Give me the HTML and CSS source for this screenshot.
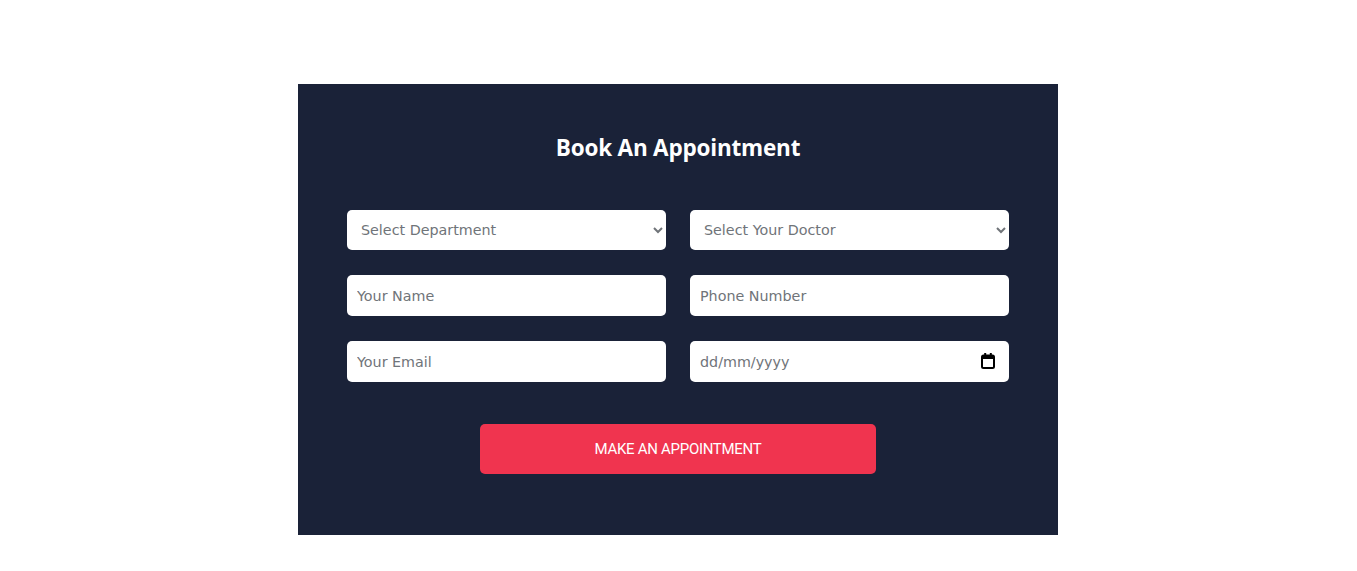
FILE: index.html
```html
<!DOCTYPE html>
<html lang="en">
<head>
<meta charset="utf-8">
<title>Book An Appointment</title>
<link rel="stylesheet" href="styles.css">
</head>
<body>
<section class="panel">
  <h2 class="title">Book An Appointment</h2>
  <form class="form">
    <div class="grid">
      <select class="field select">
        <option>Select Department</option>
      </select>
      <select class="field select">
        <option>Select Your Doctor</option>
      </select>
      <input class="field input" type="text" placeholder="Your Name">
      <input class="field input" type="text" placeholder="Phone Number">
      <input class="field input" type="text" placeholder="Your Email">
      <div class="date-wrap">
        <input class="field input" type="text" placeholder="dd/mm/yyyy">
        <svg class="cal" width="14" height="16" viewBox="0 0 14 16" aria-hidden="true">
          <rect x="1" y="2.5" width="12" height="12.5" rx="1.5" fill="none" stroke="#000" stroke-width="2"/>
          <rect x="1" y="2.5" width="12" height="3.5" fill="#000"/>
          <rect x="3.2" y="0" width="2" height="3" fill="#000"/>
          <rect x="8.8" y="0" width="2" height="3" fill="#000"/>
        </svg>
      </div>
    </div>
    <div class="actions">
      <button type="button" class="btn">MAKE AN APPOINTMENT</button>
    </div>
  </form>
</section>
</body>
</html>
```

FILE: styles.css
```css
html, body {
  margin: 0;
  padding: 0;
  background: #ffffff;
}

.panel {
  box-sizing: border-box;
  width: 760px;
  height: 451px;
  margin: 84px 0 0 298px;
  padding: 49px 49px 0;
  background: #1a2238;
}

.title {
  margin: 0 0 47px;
  text-align: center;
  color: #ffffff;
  font-family: "Open Sans", "DejaVu Sans", sans-serif;
  font-weight: 700;
  font-size: 22.5px;
  line-height: 30px;
  letter-spacing: -0.2px;
}

.grid {
  display: grid;
  grid-template-columns: 319px 319px;
  column-gap: 24px;
  row-gap: 25px;
}

.field {
  box-sizing: border-box;
  width: 100%;
  height: 41px;
  border: none;
  border-radius: 5px;
  background: #ffffff;
  color: #707479;
  font-family: "DejaVu Sans", sans-serif;
  font-size: 14.3px;
  outline: none;
}

.select {
  height: 40px;
  padding: 0 8px 0 10px;
}

.input {
  padding: 0 10px;
}

.input::placeholder {
  color: #707479;
  opacity: 1;
}

.date-wrap {
  position: relative;
}

.cal {
  position: absolute;
  right: 14px;
  top: 12px;
}

.actions {
  display: flex;
  justify-content: center;
  margin-top: 42px;
}

.btn {
  width: 396px;
  height: 50px;
  border: none;
  border-radius: 5px;
  background: #f0344f;
  color: #ffffff;
  font-family: "Roboto", sans-serif;
  font-size: 15px;
  letter-spacing: -0.3px;
  cursor: pointer;
}
```
